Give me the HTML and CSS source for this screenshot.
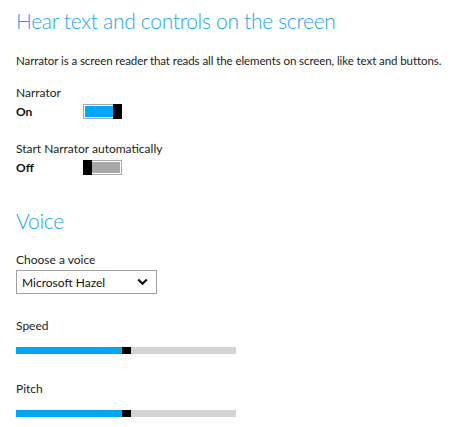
FILE: index.html
```html
<!DOCTYPE html>
<html>
<head>
<meta charset="utf-8">
<link rel="stylesheet" href="styles.css">
</head>
<body>
<div class="page">
  <h1 class="heading">Hear text and controls on the screen</h1>
  <p class="desc">Narrator is a screen reader that reads all the elements on screen, like text and buttons.</p>

  <div class="setting s-narrator">
    <div class="label">Narrator</div>
    <div class="state-row">
      <span class="state">On</span>
      <span class="toggle on"><span class="track"><span class="fill"></span></span><span class="thumb"></span></span>
    </div>
  </div>

  <div class="setting s-auto">
    <div class="label">Start Narrator automatically</div>
    <div class="state-row">
      <span class="state">Off</span>
      <span class="toggle off"><span class="thumb"></span><span class="track"><span class="fill"></span></span></span>
    </div>
  </div>

  <h2 class="heading voice">Voice</h2>

  <div class="label choose">Choose a voice</div>
  <div class="select">
    <span class="select-text">Microsoft Hazel</span>
    <svg class="chev" width="11" height="8" viewBox="0 0 11 8"><polyline points="1.2,1.5 5.5,5.8 9.8,1.5" fill="none" stroke="#111" stroke-width="2.2"/></svg>
  </div>

  <div class="label speed">Speed</div>
  <div class="slider"><span class="s-fill"></span><span class="s-thumb"></span><span class="s-rest"></span></div>

  <div class="label pitch">Pitch</div>
  <div class="slider"><span class="s-fill"></span><span class="s-thumb"></span><span class="s-rest"></span></div>
</div>
</body>
</html>
```
FILE: styles.css
```css
html, body {
  margin: 0;
  padding: 0;
  background: #ffffff;
}
body {
  font-family: "Lato", "Liberation Sans", sans-serif;
  color: #222;
}
.page {
  display: flex;
  flex-direction: column;
  align-items: flex-start;
  padding: 0 0 0 16px;
}
.heading {
  margin: 0;
  font-weight: 300;
  font-size: 21px;
  letter-spacing: -0.3px;
  line-height: 28px;
  color: #1aa6ec;
  height: 28px;
  margin-top: 7px;
  white-space: nowrap;
}
.desc {
  margin: 18px 0 0 0;
  font-size: 11.5px;
  letter-spacing: -0.08px;
  line-height: 16px;
  color: #222;
  white-space: nowrap;
}
.label {
  font-size: 12px;
  line-height: 16px;
  color: #222;
}
.setting {
  display: flex;
  flex-direction: column;
}
.s-narrator { margin-top: 16px; }
.s-auto { margin-top: 20px; }
.state-row {
  display: flex;
  align-items: center;
  height: 20px;
}
.state {
  font-size: 12px;
  font-weight: 700;
  width: 67px;
  color: #111;
}
.toggle {
  display: flex;
  width: 39px;
  height: 15px;
}
.toggle .track {
  flex: 1;
  box-sizing: border-box;
  border: 1px solid #a8a8a8;
  padding: 1px;
  background: #fff;
  display: flex;
}
.toggle .fill {
  flex: 1;
}
.toggle.on .fill { background: #00a8ff; }
.toggle.off .fill { background: #a8a8a8; }
.toggle.on .track { border-right: none; padding-right: 0; }
.toggle.off .track { border-left: none; padding-left: 0; }
.toggle .thumb {
  width: 9px;
  height: 15px;
  background: #000;
}
.voice {
  margin-top: 30px;
}
.choose { margin-top: 17px; }
.select {
  margin-top: 2px;
  box-sizing: border-box;
  width: 141px;
  height: 24px;
  border: 1px solid #a0a0a0;
  display: flex;
  align-items: center;
  justify-content: space-between;
  padding: 0 8px 0 5px;
}
.select-text {
  font-size: 12px;
  color: #111;
}
.chev { display: block; }
.speed { margin-top: 24px; }
.pitch { margin-top: 27px; }
.slider {
  margin-top: 13px;
  display: flex;
  width: 220px;
  height: 7px;
}
.s-fill { width: 106px; background: #00a8f4; }
.s-thumb { width: 9px; background: #000; }
.s-rest { flex: 1; background: #d4d4d4; }
```
